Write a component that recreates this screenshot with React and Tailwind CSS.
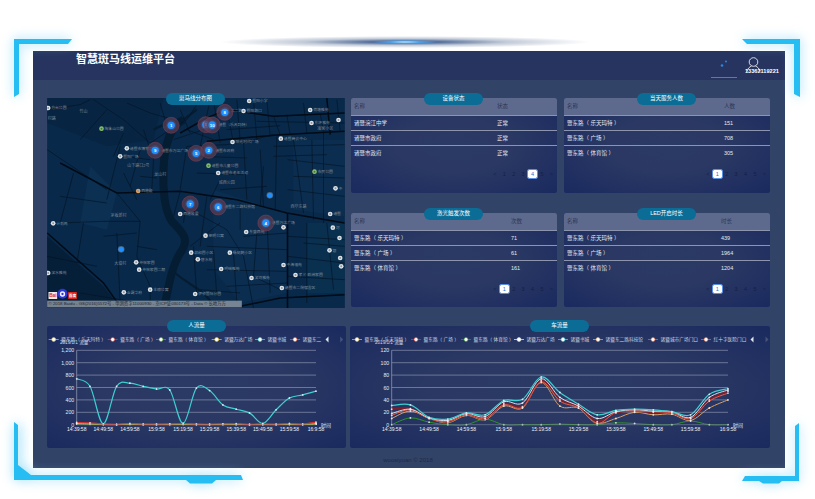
const FONT = '"Liberation Sans","Noto Sans CJK SC",sans-serif';

function smooth(pts) {
  let d = `M${pts[0][0]} ${pts[0][1]}`;
  for (let i = 0; i < pts.length - 1; i++) {
    const p0 = pts[Math.max(0, i - 1)], p1 = pts[i], p2 = pts[i + 1], p3 = pts[Math.min(pts.length - 1, i + 2)];
    const t = 0.17;
    d += ` C${(p1[0] + (p2[0] - p0[0]) * t).toFixed(1)} ${(p1[1] + (p2[1] - p0[1]) * t).toFixed(1)} ${(p2[0] - (p3[0] - p1[0]) * t).toFixed(1)} ${(p2[1] - (p3[1] - p1[1]) * t).toFixed(1)} ${p2[0]} ${p2[1]}`;
  }
  return d;
}

const LABELS = ['14:39:58', '14:49:58', '14:59:58', '15:9:58', '15:19:58', '15:29:58', '15:39:58', '15:49:58', '15:59:58', '16:9:58'];

function Chart({ w, x0, x1, max, ticks, legend, arrows, series, dateX }) {
  const yTop = 24.3, yBot = 98.7;
  const y = (v) => +(yBot - (v / max) * (yBot - yTop)).toFixed(1);
  const x = (i, n) => +(x0 + ((x1 - x0) * i) / (n - 1)).toFixed(1);
  return (
    <svg width={w} height={122} viewBox={`0 0 ${w} 122`} style={{ fontFamily: FONT }} className="block">
      {ticks.map((t) => (
        <g key={t}>
          {t !== 0 && <line x1={x0} x2={x1} y1={y(t)} y2={y(t)} stroke="#7d87a3" strokeWidth="0.8" />}
          <text x={x0 - 2.5} y={y(t) + 2} textAnchor="end" fontSize="5.2" fill="#e4e8f0">{t.toLocaleString('en-US')}</text>
        </g>
      ))}
      <line x1={x0} x2={x0} y1={yTop} y2={yBot} stroke="#9aa3ba" strokeWidth="0.7" />
      {series.map((s, si) => {
        const pts = s.data.map((v, i) => [x(i, s.data.length), y(v)]);
        return (
          <g key={si}>
            <path d={smooth(pts)} fill="none" stroke={s.color} strokeWidth={s.width || 1} />
            {pts.map((p, i) => <circle key={i} cx={p[0]} cy={p[1]} r="0.9" fill="#f4f6fa" fillOpacity="0.85" />)}
          </g>
        );
      })}
      <line x1={x0} x2={x1} y1={yBot} y2={yBot} stroke="#7f8aa0" strokeWidth="0.6" />
      {LABELS.map((l, i) => (
        <text key={l} x={x(i, 10)} y={yBot + 6.5} textAnchor="middle" fontSize="5" fill="#eef1f6">{l}</text>
      ))}
      <text x={x1 + 5} y={yBot + 2} fontSize="5" fill="#e4e8f0">时间</text>
      <text x={dateX} y="18.2" fontSize="4.6" fill="#cfd6e3">2019/1/1 流量</text>
      {legend.map((g) => (
        <g key={g.t}>
          <line x1={g.x - 5} x2={g.x + 5} y1="13.5" y2="13.5" stroke={g.c} strokeWidth="0.8" />
          <circle cx={g.x} cy="13.5" r="2" fill="#fff" stroke={g.c} strokeWidth="0.6" />
          <text x={g.x + 7.5} y="15.2" fontSize="4.7" fill="#cfd6e3">{g.t}</text>
        </g>
      ))}
      <path d={`M${arrows[0] + 1.5} 10.5 L${arrows[0] - 1.5} 13.5 L${arrows[0] + 1.5} 16.5Z`} fill="#dfe5ee" />
      <path d={`M${arrows[1] - 1.5} 10.5 L${arrows[1] + 1.5} 13.5 L${arrows[1] - 1.5} 16.5Z`} fill="#46537a" />
    </svg>
  );
}

const people = [
  { color: '#3dd0d0', width: 1.2, data: [740, 620, 15, 620, 670, 620, 575, 560, 20, 590, 550, 320, 250, 190, 20, 240, 430, 480, 540] },
  { color: '#e8a020', data: [25, 15, 8, 4, 12, 5, 5, 6, 10, 6, 4, 8, 10, 4, 6, 4, 10, 5, 20] },
  { color: '#7ab030', data: [10, 6, 2, 2, 5, 2, 2, 2, 4, 2, 2, 2, 4, 1, 2, 1, 3, 2, 8] },
  { color: '#e0c010', data: [20, 14, 4, 2, 8, 3, 3, 5, 8, 4, 2, 5, 5, 2, 3, 2, 6, 3, 12] },
  { color: '#d8352a', width: 1.2, data: [35, 30, 10, 5, 20, 10, 8, 12, 20, 10, 8, 15, 16, 5, 12, 8, 20, 10, 40] },
];
const cars = [
  { color: '#2e9428', data: [0, 11, 4, 0, 0, 9, 0, 0, 0, 1, 0, 0, 3, 2, 0, 0, 6, 0, 0] },
  { color: '#d9a066', data: [10, 22, 10, 3, 15, 8, 30, 27, 68, 30, 27, 3, 10, 20, 16, 17, 7, 27, 40] },
  { color: '#7d1f2a', width: 2, data: [25, 26, 11, 5, 17, 10, 34, 29, 71, 40, 30, 5, 19, 22, 20, 20, 10, 40, 54] },
  { color: '#e8604a', data: [15, 24, 10, 5, 16, 10, 32, 28, 69, 38, 27, 2, 20, 22, 21, 19, 10, 38, 51] },
  { color: '#d8dce8', data: [18, 25, 11, 7, 18, 13, 37, 35, 74, 44, 30, 10, 21, 24, 22, 21, 12, 44, 56] },
  { color: '#3dd0d0', width: 1.2, data: [31, 32, 12, 9, 19, 16, 39, 41, 77, 52, 33, 16, 23, 25, 24, 21, 16, 49, 58] },
];

function Pill({ children, className }) {
  return (
    <div className={`absolute h-[11.5px] w-[59px] rounded-full bg-[#0b6c96] text-white text-[5.5px] leading-[11.5px] text-center ${className}`}>
      {children}
    </div>
  );
}

function TablePanel({ title, head, rows, col, active, h, pillLeft, pagerTop }) {
  return (
    <div className={`relative ${h} rounded-[2px] bg-[radial-gradient(ellipse_at_center,#2b3a65_0%,#2a3863_40%,#1a2a5f_100%)] text-[5.5px]`}>
      <Pill className={`-top-[5px] ${pillLeft}`}>{title}</Pill>
      <div className="flex h-[17px] items-center bg-[#5e6a8d] px-[3px] text-[#2c3554] rounded-t-[2px]">
        <div className={col}>名称</div>
        <div>{head}</div>
      </div>
      {rows.map((r) => (
        <div key={r[0]} className="flex h-[15px] items-center border-t-[1.5px] border-[#8c95ad] px-[3px] text-[#e4e8f0]">
          <div className={col}>{r[0]}</div>
          <div>{r[1]}</div>
        </div>
      ))}
      <div className={`flex justify-end pr-[1px] ${pagerTop} text-[#141f44] text-[5.5px]`}>
        {['<', 1, 2, 3, 4, 5, '>'].map((n, i) => (
          <div key={i} className={`flex h-[8px] w-[9.4px] items-center justify-center ${n === active ? 'rounded-[1px] bg-white text-[#1f6fd0] outline outline-[0.5px] outline-[#5d8fe0]' : ''}`}>{n}</div>
        ))}
      </div>
    </div>
  );
}

const POIS = [
  [627, 34, '暨阳小学', 'w'], [24, 55, '方台公园', 'w'], [610, 64, '暨阳路口', 'w'], [810, 61, '荷塘雅苑', 'w'], [814, 100, '东环雅苑', 'w'], [895, 91, '', 'w'],
  [184, 117, '陶朱山公园', 'g'], [722, 147, '诸暨商会中心', 'w'], [577, 157, '阳光时代广场', 'w'], [260, 176, '诸暨市博物馆', 'w'], [240, 200, '暨阳广场', 'w'],
  [505, 228, '诸暨市儿童公园', 'g'], [534, 250, '诸暨市老年活动', 'w'], [823, 246, '市民公园', 'g'], [294, 304, '西施殿', 'o'], [886, 296, '中', 'w'],
  [420, 373, '西施故里', 'w'], [870, 373, '诸暨', 'w'], [39, 401, '计划局', 'w'], [730, 413, '', 'w'], [878, 414, '河', 'w'], [618, 427, '东盛西苑', 'w'],
  [496, 438, '翠明公寓', 'w'], [898, 445, '', 'w'], [453, 489, '祥和园小区', 'w'], [569, 489, '杨树鲍小区', 'w'], [868, 482, '银', 'w'], [473, 509, '碧水苑', 'w'],
  [900, 505, '', 'w'], [288, 518, '仲裕家园', 'w'], [903, 530, '', 'w'], [730, 526, '中海福苑', 'w'], [543, 538, '明瑞雅苑', 'w'], [297, 540, '仲裕家园二期', 'w'],
  [766, 556, '孝义·欧洲家园', 'w'], [634, 565, '滨河雅苑', 'w'], [24, 550, '滨水雅苑', 'w'], [251, 608, '金霞华府', 'w'], [330, 600, '丰琅公寓', 'w'],
  [725, 595, '诸暨市二院宿舍区', 'w'], [465, 613, '伊顿国际分园', 'w'],
];
const PLAIN = [[130, 70, '竹山'], [35, 92, '村路'], [295, 233, '山下路口2号'], [360, 258, '龙山村'], [235, 381, '茅坂新村'], [240, 526, '大塘村'], [560, 282, '城西公园'], [855, 120, '凌家小区'], [775, 354, '西华东路']];
const MARKS = [[393, 107, '1'], [554, 68, '8'], [497, 105, '1'], [516, 106, '10'], [345, 182, '9'], [468, 191, '5'], [506, 182, '2'], [450, 343, '7'], [534, 352, '6'], [677, 400, '4']];
const MARKLABELS = [[572, 68, '北二路'], [535, 108, '诸暨（乐天玛特）'], [363, 186, '诸暨市万达广场'], [525, 186, '诸暨市政府'], [552, 356, '诸暨东二路科技馆'], [695, 404, '诸暨万达广场']];
const ROADS_THICK = [
  'M21 430 L190 580 L240 650', 'M60 220 L230 310 L420 305 L590 330 L740 370 L913 400', 'M500 155 L720 135 L913 125', 'M860 25 L870 135',
  'M742 370 L742 655', 'M600 650 L720 625 L913 615', 'M420 130 L500 85 L560 60 L700 80 L913 70',
];
const ROADS = [
  'M21 60 L120 45 L150 30', 'M160 30 L250 90 L330 160', 'M330 160 L390 120 L440 90 L480 30', 'M440 170 L560 165 L640 150 L700 135',
  'M200 330 L240 170', 'M230 310 L300 395 L290 500 L330 590 L330 650', 'M420 305 L400 380', 'M450 360 L560 420 L610 500 L640 655', 'M610 155 L620 330', 'M540 270 L510 330',
  'M760 150 L790 370', 'M850 130 L850 400', 'M913 230 L742 210', 'M742 300 L913 320', 'M650 430 L640 560 L720 600', 'M500 470 L740 480', 'M500 540 L740 545', 'M120 610 L300 640',
  'M21 180 L200 300', 'M60 400 L190 395 L300 395', 'M190 440 L290 430', 'M440 170 L420 300', 'M480 170 L510 30', 'M560 60 L580 160', 'M640 30 L650 150', 'M700 80 L720 135',
  'M790 40 L800 130', 'M790 460 L913 470', 'M800 400 L800 640', 'M860 400 L880 600', 'M480 600 L600 610', 'M400 90 L330 70 L260 40', 'M440 120 L520 150', 'M250 200 L330 210',
  'M600 340 L600 420', 'M670 230 L660 350', 'M540 300 L680 290',
  'M400 150 L460 130 L520 110', 'M420 60 L450 130', 'M520 30 L540 160', 'M590 30 L600 155', 'M680 30 L690 140', 'M740 75 L750 135', 'M840 70 L850 125', 'M890 30 L900 125',
  'M650 95 L913 100', 'M560 120 L720 108', 'M700 170 L913 165', 'M700 200 L860 195', 'M760 260 L913 265', 'M660 180 L670 350', 'M710 140 L705 360', 'M815 150 L820 390',
  'M480 200 L620 205', 'M470 250 L610 255', 'M440 320 L430 400', 'M500 320 L480 470', 'M540 400 L450 470', 'M460 470 L470 620', 'M520 480 L530 620', 'M580 490 L590 640', 'M680 380 L690 610',
  'M610 440 L740 430', 'M560 590 L740 580', 'M742 500 L913 520', 'M742 440 L913 450', 'M742 560 L913 570', 'M300 260 L350 265', 'M250 250 L290 330', 'M60 320 L200 340', 'M100 250 L60 400',
  'M130 400 L110 520', 'M230 430 L240 640', 'M290 470 L350 480', 'M21 500 L170 530', 'M310 120 L340 210 L335 300', 'M250 130 L220 200', 'M300 180 L270 290', 'M360 40 L380 110', 'M200 60 L120 150',
];

function MapView() {
  return (
    <svg width="298" height="210" viewBox="21 25 893 630" className="block" style={{ fontFamily: FONT }}>
      <rect x="21" y="25" width="893" height="630" fill="#08294a" />
      <path d="M21 25 H370 L340 150 L200 170 L21 100Z" fill="#072340" opacity="0.7" />
      <path d="M21 440 L190 590 L240 655 H21Z" fill="#061f38" />
      <path d="M520 300 L740 370 V610 L600 640 L520 540Z" fill="#0b2e50" />
      <path d="M760 150 H913 V380 L760 360Z" fill="#0b2e50" />
      <path d="M150 230 L230 310 L200 420 L120 400Z" fill="#0b3052" />
      <path d="M800 400 H913 V610 H800Z" fill="#0a3050" />
      <path d="M430 90 C390 110 372 170 370 240 C368 300 372 360 395 395 C430 430 450 450 420 490 C395 530 385 590 372 655" fill="none" stroke="#051d33" strokeWidth="24" />
      <path d="M405 550 C450 590 500 600 520 655" fill="none" stroke="#051d33" strokeWidth="7" />
      <path d="M340 120 C370 100 400 100 430 90 L470 60" fill="none" stroke="#051d33" strokeWidth="7" />
      {ROADS.map((d, i) => <path key={i} d={d} fill="none" stroke="#031425" strokeWidth="2" />)}
      {ROADS_THICK.map((d, i) => <path key={i} d={d} fill="none" stroke="#010b16" strokeWidth="4.5" />)}
      {PLAIN.map((p) => <text key={p[2]} x={p[0]} y={p[1]} fontSize="12" fill="#76838f" textAnchor="middle">{p[2]}</text>)}
      {POIS.map((p, i) => (
        <g key={i}>
          <circle cx={p[0]} cy={p[1]} r="7" fill={p[3] === 'g' ? '#8cc06a' : p[3] === 'o' ? '#e0a060' : '#dfe3e6'} />
          <circle cx={p[0]} cy={p[1]} r="3" fill={p[3] === 'g' ? '#3f7a40' : '#8d97a0'} />
          {p[2] && <text x={p[0] + 9} y={p[1] + 4} fontSize="11.5" fill="#7f8c9a">{p[2]}</text>}
        </g>
      ))}
      {MARKLABELS.map((p) => <text key={p[2]} x={p[0]} y={p[1]} fontSize="11.5" fill="#7f8c9a">{p[2]}</text>)}
      {[[689, 317], [243, 479]].map((p, i) => (
        <g key={i}>
          <circle cx={p[0]} cy={p[1]} r="10" fill="#46607a" />
          <circle cx={p[0]} cy={p[1]} r="8" fill="#1e90ff" />
        </g>
      ))}
      {MARKS.map((m, i) => (
        <g key={i}>
          <circle cx={m[0]} cy={m[1]} r="24" fill="#5c3f56" fillOpacity="0.7" stroke="#8a3f50" strokeWidth="1.5" />
          <circle cx={m[0]} cy={m[1]} r="15" fill="#4a4a6c" fillOpacity="0.8" />
          <circle cx={m[0]} cy={m[1]} r="11" fill="#1e90ff" />
          <text x={m[0]} y={m[1] + 5} fontSize="13" fontWeight="700" fill="#fff" textAnchor="middle">{m[2]}</text>
        </g>
      ))}
      <rect x="25" y="607" width="26" height="21" fill="#f0e8e8" />
      <rect x="84" y="607" width="26" height="21" fill="#d8261c" />
      <text x="38" y="623" fontSize="14" fontWeight="700" fill="#d8261c" textAnchor="middle">Bai</text>
      <text x="97" y="622" fontSize="11" fontWeight="700" fill="#fff" textAnchor="middle">百度</text>
      <circle cx="67" cy="612" r="15" fill="#2b35d8" />
      <circle cx="67" cy="613" r="8" fill="#eef2ff" />
      <circle cx="67" cy="613" r="3.5" fill="#2b35d8" />
      <rect x="21" y="633" width="584" height="20" fill="#8a94a0" fillOpacity="0.85" />
      <text x="25" y="647" fontSize="13" fill="#20262e">© 2018 Baidu - GS(2016)5572号 - 甲测资字11000930 - 京ICP证030173号 - Data © 长地万方</text>
    </svg>
  );
}

function Decor() {
  return (
    <svg className="absolute left-0 top-0 pointer-events-none" width="815" height="499" viewBox="0 0 815 499">
      <defs>
        <radialGradient id="g1"><stop offset="0" stopColor="#3b8fe0" /><stop offset="0.2" stopColor="#2f4f86" stopOpacity="0.8" /><stop offset="0.55" stopColor="#33507f" stopOpacity="0.3" /><stop offset="1" stopColor="#33507f" stopOpacity="0" /></radialGradient>
        <radialGradient id="g2"><stop offset="0" stopColor="#d8f4ff" /><stop offset="0.5" stopColor="#4aa8f0" stopOpacity="0.8" /><stop offset="1" stopColor="#4aa8f0" stopOpacity="0" /></radialGradient>
        <filter id="glow" x="-30%" y="-30%" width="160%" height="160%"><feGaussianBlur stdDeviation="6" /></filter>
      </defs>
      <ellipse cx="405" cy="42" rx="185" ry="6" fill="url(#g1)" />
      <ellipse cx="405" cy="42" rx="32" ry="2.2" fill="url(#g2)" />
      <g fill="#7fd6f8" filter="url(#glow)" opacity="0.8">
        <path d="M14 39H72L68 44H19V94L14 97Z" />
        <path d="M742 39H800V97L794 94V44H747Z" />
        <path d="M14 422L21 427V465L33 475H238L243 480H216L210 484H192L186 480H14Z" />
        <path d="M799 423V481H782L776 484H765L759 481H742L746 476H795V427Z" />
      </g>
      <g fill="#26bdf2">
        <path d="M14 39H72L68 44H19V94L14 97Z" />
        <path d="M742 39H800V97L794 94V44H747Z" />
        <path d="M14 422L18 425V465L31 475H241L243 480H216L212 483.5H190L186 480H14Z" />
        <path d="M799 423V481H782L779 483.5H763L759 481H742L745 476H795V426Z" />
      </g>
    </svg>
  );
}

export default function App() {
  return (
    <div className="relative h-[499px] w-[815px] overflow-hidden bg-white pl-[33px] pt-[51px]" style={{ fontFamily: FONT }}>
      <div className="h-[417px] w-[752px] bg-[#324368]">
        <header className="relative flex h-[29px] bg-[#27345f]">
          <h1 className="ml-[43px] mt-[2px] text-[11px] font-bold leading-[13px] text-white">智慧斑马线运维平台</h1>
          <div className="ml-auto mr-[48px] flex h-[26.5px] w-[26px] items-center justify-center border-b border-[#2a86e0]">
            <svg width="10" height="10" viewBox="0 0 10 10"><circle cx="7" cy="2.5" r="1" fill="#2a86e0" /><circle cx="3" cy="6.5" r="1.3" fill="#2a86e0" /></svg>
          </div>
          <div className="absolute left-[712px] top-[6px] flex w-[36px] flex-col items-start">
            <svg className="ml-[0.5px]" width="15" height="15" viewBox="0 0 15 15" fill="none" stroke="#fff" strokeWidth="0.8"><circle cx="7.5" cy="5" r="4.3" /><path d="M1 14.5C1.5 11.5 3.5 10 5.5 9M14 14.5C13.5 11.5 11.5 10 9.5 9" /></svg>
            <span className="-mt-[4px] text-[5.6px] font-bold leading-[7px] text-white">13362119221</span>
          </div>
        </header>
        <main className="px-[14px] pt-[18px]">
          <div className="flex gap-[6px]">
            <div className="relative h-[210px] w-[298px]">
              <Pill className="-top-[5px] left-[119px]">斑马线分布图</Pill>
              <MapView />
            </div>
            <div className="grid w-[419px] grid-cols-[206px_206px] gap-x-[7px] content-start">
              <TablePanel title="设备状态" head="状态" col="w-[143px]" h="h-[95px] mb-[20px]" pillLeft="left-[73px]" active={4} pagerTop="pt-[10px]"
                rows={[['诸暨浣江中学', '正常'], ['诸暨市政府', '正常'], ['诸暨市政府', '正常']]} />
              <TablePanel title="当天服务人数" head="人数" col="w-[157px]" h="h-[95px] mb-[20px]" pillLeft="left-[73px]" active={1} pagerTop="pt-[10px]"
                rows={[['暨东路（ 乐天玛特 ）', '151'], ['暨东路（ 广场 ）', '708'], ['暨东路（ 体育馆 ）', '305']]} />
              <TablePanel title="激光触发次数" head="次数" col="w-[157px]" h="h-[94px]" pillLeft="left-[73px]" active={1} pagerTop="pt-[10px]"
                rows={[['暨东路（ 乐天玛特 ）', '71'], ['暨东路（ 广场 ）', '61'], ['暨东路（ 体育馆 ）', '161']]} />
              <TablePanel title="LED开启时长" head="时长" col="w-[154px]" h="h-[94px]" pillLeft="left-[73px]" active={1} pagerTop="pt-[10px]"
                rows={[['暨东路（ 乐天玛特 ）', '439'], ['暨东路（ 广场 ）', '1964'], ['暨东路（ 体育馆 ）', '1204']]} />
            </div>
          </div>
          <div className="mt-[18px] flex gap-[4px]">
            <div className="relative h-[122px] w-[299px] rounded-[2px] bg-[radial-gradient(ellipse_at_center,#2b3a65_0%,#2a3863_45%,#1a2a5f_100%)]">
              <Pill className="-top-[6px] left-[120px]">人流量</Pill>
              <Chart w={299} x0={29.7} x1={269} max={1200} ticks={[0, 200, 400, 600, 800, 1000, 1200]} arrows={[280, 294.7]} dateX={13}
                series={people}
                legend={[
                  { x: 6.7, c: '#c9b458', t: '暨东路（ 乐天玛特 ）' }, { x: 65.7, c: '#d8352a', t: '暨东路（ 广场 ）' }, { x: 114, c: '#4f9a30', t: '暨东路（ 体育馆 ）' },
                  { x: 169.7, c: '#e0c010', t: '诸暨万达广场' }, { x: 213, c: '#3dd0d0', t: '诸暨书城' }, { x: 248, c: '#d8603a', t: '诸暨东二' },
                ]} />
            </div>
            <div className="relative h-[122px] w-[420px] rounded-[2px] bg-[radial-gradient(ellipse_at_center,#2b3a65_0%,#2a3863_45%,#1a2a5f_100%)]">
              <Pill className="-top-[6px] left-[180px]">车流量</Pill>
              <Chart w={420} x0={41.7} x1={378} max={120} ticks={[0, 20, 40, 60, 80, 100, 120]} arrows={[402, 417]} dateX={25}
                series={cars}
                legend={[
                  { x: 7, c: '#c9b458', t: '暨东路（ 乐天玛特 ）' }, { x: 66, c: '#d8352a', t: '暨东路（ 广场 ）' }, { x: 116, c: '#2e9428', t: '暨东路（ 体育馆 ）' },
                  { x: 169, c: '#d8dce8', t: '诸暨万达广场' }, { x: 213, c: '#3dd0d0', t: '诸暨书城' }, { x: 248, c: '#d8a060', t: '诸暨东二路科技馆' },
                  { x: 303, c: '#d8603a', t: '诸暨城市广场门口' }, { x: 356, c: '#d8603a', t: '红十字医院门口' },
                ]} />
            </div>
          </div>
          <footer className="mt-[8px] pr-[2px] text-center text-[6px] leading-[8px] text-[#1f2a45]">woosiyuan © 2018</footer>
        </main>
      </div>
      <Decor />
    </div>
  );
}
